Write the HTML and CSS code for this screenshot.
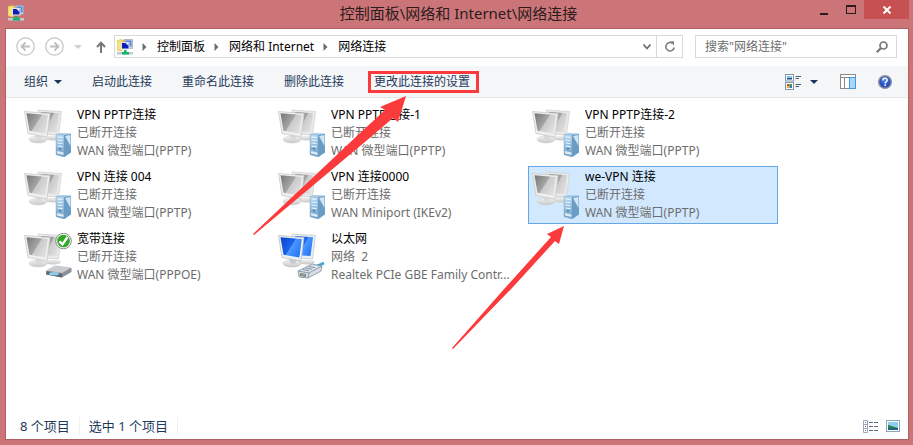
FILE: index.html
```html
<!DOCTYPE html>
<html lang="zh-CN">
<head>
<meta charset="utf-8">
<title>网络连接</title>
<link rel="stylesheet" href="styles.css">
</head>
<body>
<svg class="defs" aria-hidden="true">
  <defs>
    <linearGradient id="grayScreen" x1="0" y1="0" x2="1" y2=".6">
      <stop offset="0" stop-color="#757575"/><stop offset=".55" stop-color="#a6a6a6"/><stop offset=".58" stop-color="#cacaca"/><stop offset="1" stop-color="#dedede"/>
    </linearGradient>
    <linearGradient id="blueScreen" x1="0" y1="0" x2="1" y2=".6">
      <stop offset="0" stop-color="#0b45c8"/><stop offset=".55" stop-color="#1c63ee"/><stop offset=".58" stop-color="#4a97ff"/><stop offset="1" stop-color="#2a78f5"/>
    </linearGradient>
    <linearGradient id="stand" x1="0" y1="0" x2="0" y2="1">
      <stop offset="0" stop-color="#f4f4f4"/><stop offset="1" stop-color="#c6c6c6"/>
    </linearGradient>
    <linearGradient id="tower" x1="0" y1="0" x2="0" y2="1">
      <stop offset="0" stop-color="#b9d9f0"/><stop offset="1" stop-color="#6b9cc4"/>
    </linearGradient>
    <radialGradient id="help" cx=".5" cy=".35" r=".7">
      <stop offset="0" stop-color="#4f7fe6"/><stop offset="1" stop-color="#1237a8"/>
    </radialGradient>
    <symbol id="monitors-off" viewBox="0 0 48 48">
      <ellipse cx="29" cy="29" rx="8" ry="2.500" fill="url(#stand)"/>
      <path d="M14 1L37.500 2.500L34.500 26L17 25Z" fill="#e9e9e9" stroke="#cfcfcf" stroke-width=".7"/>
      <path d="M17 3L35 4.300L32.500 23L17 22Z" fill="url(#grayScreen)"/>
      <ellipse cx="14" cy="30.500" rx="9" ry="3.500" fill="url(#stand)" stroke="#d0d0d0" stroke-width=".5"/>
      <path d="M11 24h7v6q-3 2-6 0z" fill="#dadada"/>
      <path d="M.5 2.500L26 4.500L23 28L4 24.500Z" fill="#efefef" stroke="#cacaca" stroke-width=".8"/>
      <path d="M2.500 4.300L23.800 6L21.400 24.500L5.500 21.800Z" fill="url(#grayScreen)"/>
    </symbol>
    <symbol id="monitors-on" viewBox="0 0 48 48">
      <ellipse cx="29" cy="29" rx="8" ry="2.500" fill="url(#stand)"/>
      <path d="M14 1L37.500 2.500L34.500 26L17 25Z" fill="#e9eef2" stroke="#bfc6cc" stroke-width=".7"/>
      <path d="M17 3L35 4.300L32.500 23L17 22Z" fill="url(#blueScreen)"/>
      <ellipse cx="14" cy="30.500" rx="9" ry="3.500" fill="url(#stand)" stroke="#bbb" stroke-width=".5"/>
      <path d="M11 24h7v6q-3 2-6 0z" fill="#c9ccce"/>
      <path d="M.5 2.500L26 4.500L23 28L4 24.500Z" fill="#edf1f4" stroke="#b9bfc4" stroke-width=".8"/>
      <path d="M2.500 4.300L23.800 6L21.400 24.500L5.500 21.800Z" fill="url(#blueScreen)"/>
    </symbol>
    <symbol id="net-vpn" viewBox="0 0 48 48">
      <use href="#monitors-off" width="48" height="48"/>
      <path d="M32 25L37 24L47 24.500V43L41 48L32 46Z" fill="#a9cbe4"/>
      <path d="M32 25.500L40 26V48L32 45.500Z" fill="url(#tower)" stroke="#8fb3cf" stroke-width=".5"/>
      <path d="M40 26L47 25V43.500L40 48Z" fill="#6b9cc4"/>
      <path d="M41 27L46.500 37V26Z" fill="#cfe6f6"/>
      <path d="M33.500 28l5 .4M33.500 31l5 .5M33.500 34l5 .5M33.500 37l5 .6" stroke="#eaf6ff" stroke-width="1.200"/>
      <path d="M33 42l6.500 1.500v2.500l-6.500-1.500z" fill="#dcebf5"/>
      <rect x="35" y="39" width="2" height="1.500" fill="#4b80aa"/>
    </symbol>
    <symbol id="net-modem" viewBox="0 0 48 48">
      <use href="#monitors-off" width="48" height="48"/>
      <path d="M22 38L31 33L47.500 35V39L38 44.500L22 41.500Z" fill="#8c9196"/>
      <path d="M22 37.500L31 32.500L47.500 34.500L38 40Z" fill="#c9cdd0"/>
      <path d="M22.500 38.500L38 40.500V44.500L22.500 41.500Z" fill="#5b6873"/>
      <ellipse cx="30" cy="40.700" rx="5" ry="1.600" fill="#8fcdf0"/>
      <circle cx="39.500" cy="8" r="7.800" fill="#f4f4f4" stroke="#8b8f8b"/>
      <circle cx="39.500" cy="8" r="6.300" fill="#35a827"/>
      <path d="M35.500 8.200l3 3.300l5-7.500" fill="none" stroke="#fff" stroke-width="2.300"/>
    </symbol>
    <symbol id="net-ethernet" viewBox="0 0 48 48">
      <use href="#monitors-on" width="48" height="48"/>
      <path d="M37 34l9-4" stroke="#39a9d4" stroke-width="3"/>
      <path d="M20 38L34 31L44 33L43 38L30 45L21 44Z" fill="#d7dee6" stroke="#7e8d9d" stroke-width=".8"/>
      <path d="M20 38L31 40L44 33M31 40L30 45" fill="none" stroke="#7e8d9d" stroke-width=".8"/>
      <path d="M25 36.500l6 1.200M28 35l6 1.200M31 33.500l6 1.200" stroke="#8896a6"/>
      <path d="M22 40l6 1v3l-6-1z" fill="#6f7f90"/>
      <path d="M24 40.500v2.500M26 41v2.500" stroke="#e8c24a" stroke-width=".8"/>
    </symbol>
    <symbol id="net-folder" viewBox="0 0 16 16">
      <path d="M0 1.500L5 .5V12L0 11Z" fill="#f7e27e" stroke="#d9b93e" stroke-width=".6"/>
      <path d="M5 1h3v9H5z" fill="#e9c85a"/>
      <path d="M7 .5h8.500v9H10z" fill="#c9d2dc" stroke="#8e99a8" stroke-width=".6"/>
      <rect x="8.500" y="1.500" width="6" height="6" fill="#5d86e6"/>
      <rect x="4" y="3" width="8.500" height="7.500" fill="#e1e5ea"/>
      <rect x="5" y="4" width="6.500" height="5.500" fill="#0c1fb8"/>
      <path d="M8.500 4h3v3z" fill="#e8f0ff"/>
      <rect x="0" y="13" width="16" height="2.500" fill="#c3cbd1"/>
      <path d="M7 11h2.500v2H12v2.500H5V13h2z" fill="#12b56b"/>
    </symbol>
    <symbol id="chev" viewBox="0 0 5 8"><path d="M.5 0L4.500 4L.5 8Z" fill="#6d6d6d"/></symbol>
    <symbol id="drop" viewBox="0 0 8 4"><path d="M0 0H8L4 4Z" fill="currentColor"/></symbol>
  </defs>
</svg>

<header class="titlebar">
  <svg class="i16"><use href="#net-folder"/></svg>
  <h1>控制面板\网络和 Internet\网络连接</h1>
  <div class="captions">
    <button class="cap" aria-label="最小化"><svg width="12" height="12"><rect x="2" y="9" width="8" height="2" fill="#2b1b1c"/></svg></button>
    <button class="cap" aria-label="最大化"><svg width="12" height="12"><path d="M1 1h10v2H1z" fill="#2b1b1c"/><rect x="1.500" y="1.500" width="9" height="8" fill="none" stroke="#2b1b1c"/></svg></button>
    <button class="cap close" aria-label="关闭"><svg width="8" height="8"><path d="M.5 .5L7.500 7.500M7.500 .5L.5 7.500" stroke="#fff" stroke-width="2"/></svg></button>
  </div>
</header>

<div class="frame">
  <nav class="navbar">
    <button class="round" aria-label="后退"><svg width="19" height="19"><circle cx="9.500" cy="9.500" r="8.700" fill="none" stroke="#c4c4c4" stroke-width="1.200"/><path d="M14 9.500H6M9.500 5.500L5.500 9.500L9.500 13.500" fill="none" stroke="#bdbdbd" stroke-width="1.800"/></svg></button>
    <button class="round" aria-label="前进"><svg width="19" height="19"><circle cx="9.500" cy="9.500" r="8.700" fill="none" stroke="#c4c4c4" stroke-width="1.200"/><path d="M5 9.500H13M9.500 5.500L13.500 9.500L9.500 13.500" fill="none" stroke="#bdbdbd" stroke-width="1.800"/></svg></button>
    <button class="recent" aria-label="最近的位置"><svg width="8" height="4"><use href="#drop"/></svg></button>
    <button class="up" aria-label="上移"><svg width="10" height="12"><path d="M5 12V2M1 6L5 1.800L9 6" fill="none" stroke="#777" stroke-width="2"/></svg></button>
    <div class="address">
      <svg class="i16"><use href="#net-folder"/></svg>
      <svg class="chev"><use href="#chev"/></svg>
      <button>控制面板</button>
      <svg class="chev"><use href="#chev"/></svg>
      <button>网络和 Internet</button>
      <svg class="chev"><use href="#chev"/></svg>
      <button>网络连接</button>
      <button class="history" aria-label="历史记录"><svg width="8" height="6"><path d="M.5 .5L4 4.500L7.500 .5" fill="none" stroke="#6d6d6d" stroke-width="1.800"/></svg></button>
      <button class="refresh" aria-label="刷新"><svg width="12" height="12"><path d="M8.500 2.300A4.200 4.200 0 1 0 10.200 6.500" fill="none" stroke="#808080" stroke-width="1.600"/><path d="M5.800 .3H10V4.600Z" fill="#808080"/></svg></button>
    </div>
    <label class="search">
      <input type="search" placeholder='搜索"网络连接"' aria-label="搜索网络连接">
      <svg width="12" height="12"><circle cx="7.500" cy="4.500" r="3.500" fill="none" stroke="#767676" stroke-width="1.700"/><path d="M5 7L.8 11.200" stroke="#767676" stroke-width="2.200"/></svg>
    </label>
  </nav>

  <div class="toolbar">
    <button class="organize">组织<svg width="8" height="4"><use href="#drop"/></svg></button>
    <button>启动此连接</button>
    <button>重命名此连接</button>
    <button>删除此连接</button>
    <button class="marked">更改此连接的设置</button>
    <div class="tools">
      <button class="views" aria-label="更改视图">
        <svg width="17" height="16"><rect x=".5" y=".5" width="8" height="6.500" fill="#fff" stroke="#8296ad"/><rect x="2" y="2" width="5" height="2" fill="#85c8ef"/><rect x="2" y="4" width="5" height="1.500" fill="#1d4f7c"/><rect x=".5" y="8.500" width="8" height="7" fill="#fff" stroke="#8296ad"/><rect x="2" y="10" width="2.500" height="2" fill="#d84a38"/><rect x="4.500" y="10" width="2.500" height="2" fill="#3a9b45"/><rect x="2" y="12" width="2.500" height="2" fill="#efb32e"/><rect x="4.500" y="12" width="2.500" height="2" fill="#3c6fd0"/><path d="M10.500 2.500H16M10.500 4.500H14M10.500 10.500H16M10.500 12.500H14" stroke="#4b5f7c"/></svg>
        <svg width="8" height="4"><use href="#drop"/></svg>
      </button>
      <button aria-label="预览窗格"><svg width="16" height="15"><rect x=".5" y=".5" width="15" height="14" fill="#fff" stroke="#8a8a8a"/><path d="M1 3.500H15M4.500 4V14" stroke="#8a8a8a"/><rect x="9.500" y="3.500" width="6" height="11" fill="#a9d7fb" stroke="#3d9be8"/></svg></button>
      <button aria-label="帮助"><svg width="14" height="14"><circle cx="7" cy="7" r="6.300" fill="url(#help)" stroke="#8b909c" stroke-width="1.400"/><path d="M4.800 5.400C4.800 2.500 9.300 2.600 9.200 5.200C9.100 6.700 7.200 6.700 7.200 8.500" fill="none" stroke="#fff" stroke-width="1.500"/><rect x="6.400" y="9.500" width="1.600" height="1.600" fill="#fff"/></svg></button>
    </div>
  </div>

  <main>
    <ul class="items">
      <li><button><svg class="i48"><use href="#net-vpn"/></svg><span class="text"><b>VPN PPTP连接</b><span>已断开连接</span><span>WAN 微型端口(PPTP)</span></span></button></li>
      <li><button><svg class="i48"><use href="#net-vpn"/></svg><span class="text"><b>VPN PPTP连接-1</b><span>已断开连接</span><span>WAN 微型端口(PPTP)</span></span></button></li>
      <li><button><svg class="i48"><use href="#net-vpn"/></svg><span class="text"><b>VPN PPTP连接-2</b><span>已断开连接</span><span>WAN 微型端口(PPTP)</span></span></button></li>
      <li><button><svg class="i48"><use href="#net-vpn"/></svg><span class="text"><b>VPN 连接 004</b><span>已断开连接</span><span>WAN 微型端口(PPTP)</span></span></button></li>
      <li><button><svg class="i48"><use href="#net-vpn"/></svg><span class="text"><b>VPN 连接0000</b><span>已断开连接</span><span>WAN Miniport (IKEv2)</span></span></button></li>
      <li><button class="selected"><svg class="i48"><use href="#net-vpn"/></svg><span class="text"><b>we-VPN 连接</b><span>已断开连接</span><span>WAN 微型端口(PPTP)</span></span></button></li>
      <li><button><svg class="i48"><use href="#net-modem"/></svg><span class="text"><b>宽带连接</b><span>已断开连接</span><span>WAN 微型端口(PPPOE)</span></span></button></li>
      <li><button><svg class="i48"><use href="#net-ethernet"/></svg><span class="text"><b>以太网</b><span>网络&nbsp; 2</span><span>Realtek PCIe GBE Family Contr...</span></span></button></li>
    </ul>
  </main>

  <footer class="status">
    <span>8 个项目</span>
    <span>选中 1 个项目</span>
    <div class="modes">
      <button aria-label="详细信息"><svg width="15" height="13"><path d="M.5 .5H4.500V12.500H.5ZM.5 4.500H4.500M.5 8.500H4.500" fill="#fff" stroke="#9aa9b8"/><path d="M2 2.500h1M2 10.500h1" stroke="#3a7ab8"/><path d="M2 6.500h1" stroke="#c33"/><path d="M6 2.500h4M11 2.500h4M6 6.500h4M11 6.500h4M6 10.500h4M11 10.500h4" stroke="#5a6b82"/></svg></button>
      <button aria-label="大图标"><svg width="14" height="12"><rect x=".5" y=".5" width="13" height="11" fill="#fff" stroke="#8fa3b8"/><rect x="2" y="2" width="10" height="8" fill="#8fcdf0"/><path d="M2 5L12 8V10H2Z" fill="#2b7a4c"/><path d="M2 8.500L12 8.500V10H2Z" fill="#1d5c96"/></svg></button>
    </div>
  </footer>
</div>

<svg class="pointers" width="600" height="400" aria-hidden="true">
  <path d="M406 96L380 107L385 110L359 134L253 234L254 235L372 136L393 118L398 122Z"/>
  <path d="M564 226L547 234L551 237L505 288L452 348L453 349L513 287L555 241L559 244Z"/>
</svg>
</body>
</html>
```
FILE: styles.css
```css
* { box-sizing: border-box; }

body {
  margin: 0;
  height: 100vh;
  padding: 0 4px 5px 5px;
  display: flex;
  flex-direction: column;
  position: relative;
  overflow: hidden;
  background: #cb7578;
  font: 12px/18px "Noto Sans", "Noto Sans CJK SC", sans-serif;
  color: #000;
}

button {
  margin: 0;
  padding: 0;
  border: 0;
  background: none;
  font: inherit;
  color: inherit;
  white-space: nowrap;
}

svg { display: block; flex: none; }
.defs { position: absolute; width: 0; height: 0; }
.i16 { width: 16px; height: 16px; }
.i48 { width: 48px; height: 48px; }

.titlebar {
  height: 28px;
  flex: none;
  display: grid;
  grid-template-columns: 1fr auto 1fr;
  align-items: center;
  padding: 0 0 2px 3px;
}
.titlebar h1 {
  margin: 0;
  font-size: 15px;
  line-height: 26px;
  font-weight: 400;
  color: #2b1b1c;
}
.captions { display: flex; justify-self: end; align-self: start; }
.cap { width: 27px; height: 19px; display: grid; place-items: center; }
.cap.close { width: 45px; background: #c75050; }

.frame {
  flex: 1;
  min-height: 0;
  display: flex;
  flex-direction: column;
  border: 1px solid #b15f63;
  background: #fff;
}

.navbar {
  flex: none;
  display: flex;
  align-items: center;
  height: 37px;
  padding: 0 11px 2px 10px;
}
.round { margin-right: 10px; }
.recent { margin-right: 14px; color: #d0d0d0; }
.up { margin-right: 8px; }
.address, .search {
  display: flex;
  align-items: center;
  height: 23px;
  border: 1px solid #d9d9d9;
}
.address { flex: 1; margin-right: 12px; padding-left: 2px; }
.address .chev { width: 5px; height: 8px; margin: 0 10px 0 9px; }
.history { margin-left: auto; padding: 0 5px; }
.refresh {
  width: 26px;
  align-self: stretch;
  display: grid;
  place-items: center;
  border-left: 1px solid #d9d9d9;
}
.search { width: 202px; padding: 0 8px 0 9px; }
.search input {
  flex: 1;
  min-width: 0;
  padding: 0;
  border: 0;
  outline: 0;
  background: none;
  font: inherit;
}
.search input::placeholder { color: #6d6d6d; opacity: 1; }

.toolbar {
  flex: none;
  display: flex;
  align-items: center;
  gap: 30px;
  height: 32px;
  padding: 0 16px 0 18px;
  background: #f5f6f7;
  border-bottom: 1px solid #e6e7e8;
  color: #1e395b;
}
.organize { display: flex; align-items: center; gap: 6px; }
.marked {
  margin-left: -6px;
  padding: 0 6px 0 3px;
  line-height: 16px;
  border: 3px solid #fb3b3b;
}
.tools { display: flex; align-items: center; gap: 22px; margin-left: auto; }
.views { display: flex; align-items: center; gap: 8px; }

main { flex: 1; min-height: 0; padding: 6px 14px; }
.items {
  list-style: none;
  margin: 0;
  padding: 0;
  display: grid;
  grid-template-columns: repeat(auto-fill, 250px);
  gap: 4px;
}
.items button {
  width: 100%;
  display: flex;
  align-items: center;
  gap: 5px;
  padding: 1px 3px;
  border: 1px solid transparent;
  text-align: left;
}
.items .selected { background: #d1e8ff; border-color: #66a7e8; }
.text { display: grid; color: #6d6d6d; }
.text b { font-weight: 400; color: #000; }

.status {
  flex: none;
  display: flex;
  align-items: center;
  height: 26px;
  padding: 0 8px 0 14px;
  gap: 9px;
  font-size: 13px;
  color: #1e395b;
}
.status span { padding-right: 9px; border-right: 1px solid #f0f0f0; }
.modes { display: flex; align-items: center; gap: 8px; margin-left: auto; }

.pointers {
  position: absolute;
  left: 0;
  top: 0;
  fill: #fb3b3b;
  pointer-events: none;
}
```
